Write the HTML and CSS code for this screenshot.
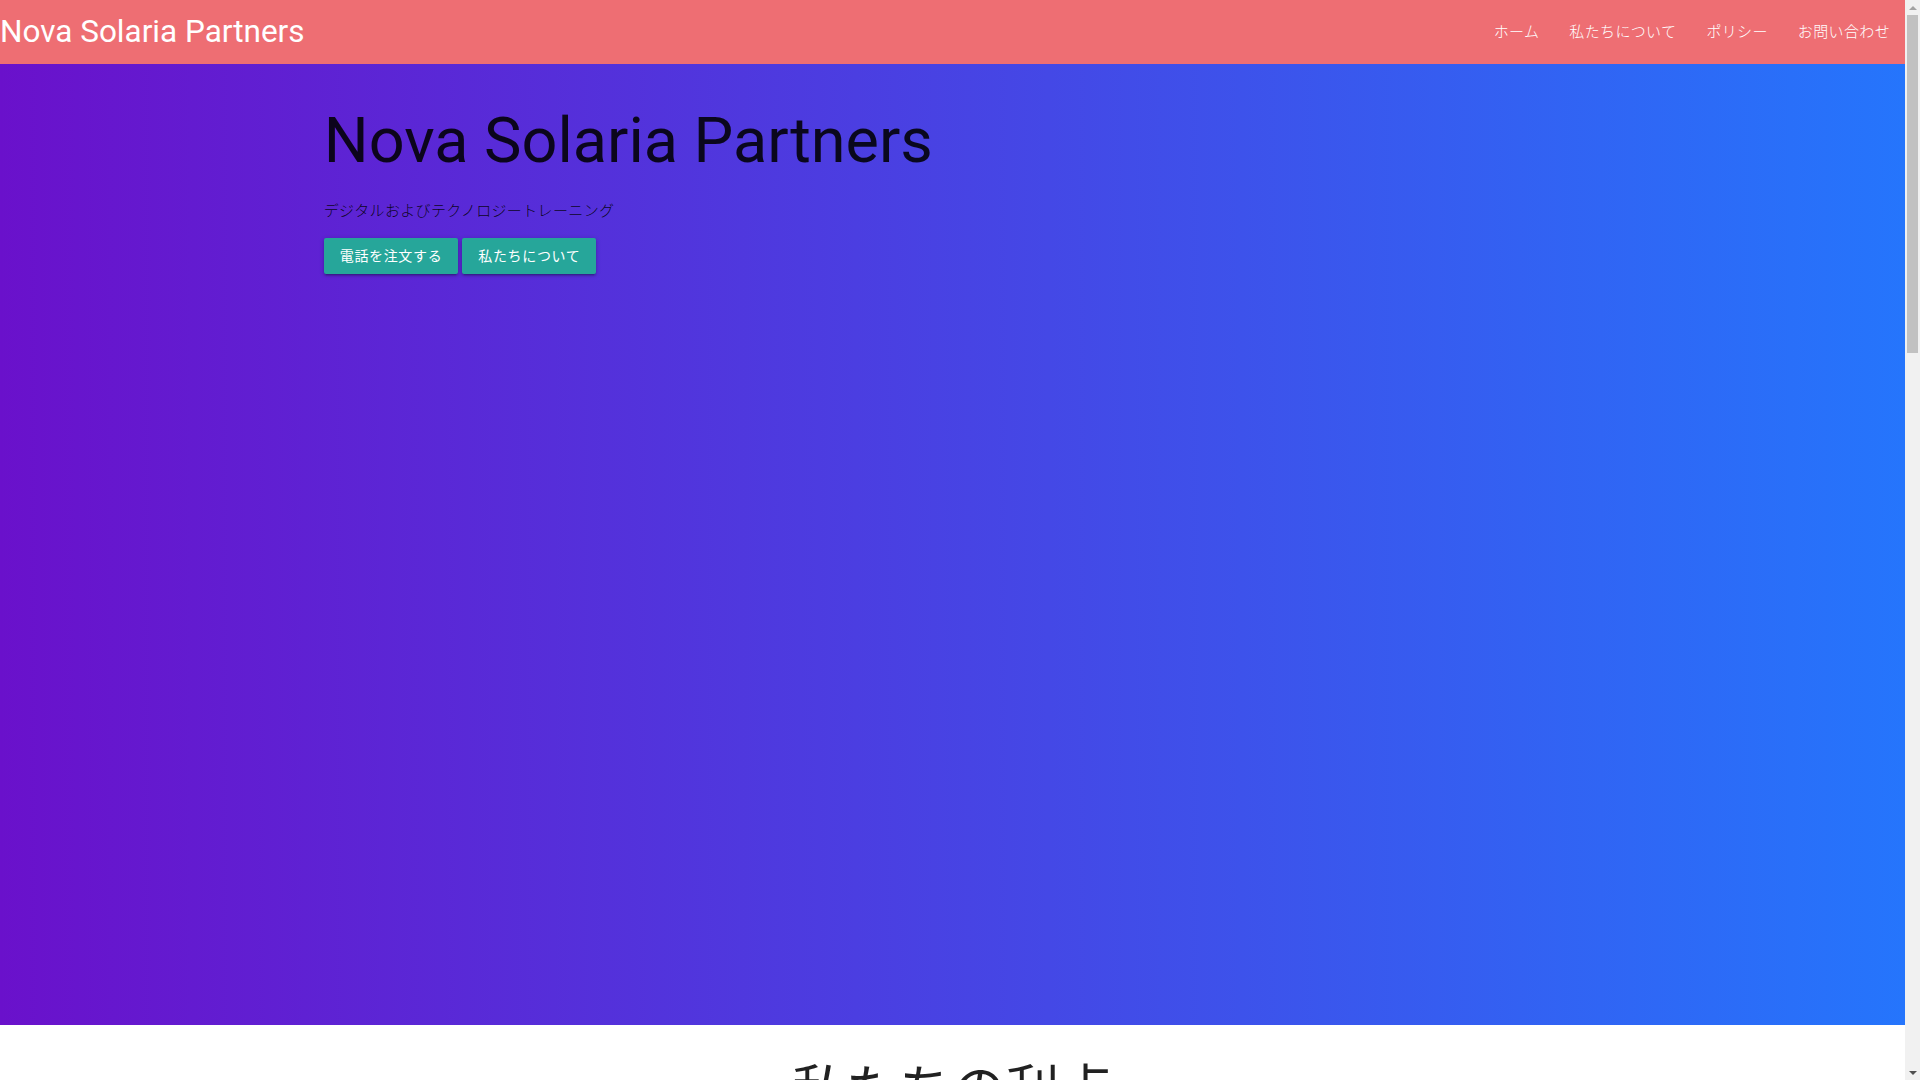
FILE: index.html
```html
<!DOCTYPE html>
<html lang="ja">
<head>
<meta charset="utf-8">
<title>Nova Solaria Partners</title>
<link rel="stylesheet" href="styles.css">
</head>
<body>
<div class="page">
<nav class="navbar">
  <a class="brand" href="#">Nova Solaria Partners</a>
  <ul class="nav-links">
    <li><a href="#">ホーム</a></li>
    <li><a href="#">私たちについて</a></li>
    <li><a href="#">ポリシー</a></li>
    <li><a href="#">お問い合わせ</a></li>
  </ul>
</nav>
<header class="hero">
  <div class="container">
    <div class="col">
      <h1 class="hero-title">Nova Solaria Partners</h1>
      <p class="hero-sub">デジタルおよびテクノロジートレーニング</p>
      <div class="actions">
        <a class="btn" href="#">電話を注文する</a>
        <a class="btn" href="#">私たちについて</a>
      </div>
    </div>
  </div>
</header>
<section class="benefits">
  <div class="container">
    <h2 class="section-title">私たちの利点</h2>
    <div class="features">
      <div class="feature">
        <h3>経験豊富な講師</h3>
        <p>業界で長年の経験を持つ専門家が、実践的な知識をお届けします。</p>
      </div>
      <div class="feature">
        <h3>柔軟なスケジュール</h3>
        <p>オンラインとオフラインのコースで、ご都合に合わせて学べます。</p>
      </div>
      <div class="feature">
        <h3>最新のカリキュラム</h3>
        <p>常に最新のデジタル技術とトレンドに対応した内容です。</p>
      </div>
    </div>
  </div>
</section>
<section class="about">
  <div class="container">
    <h2 class="section-title">私たちについて</h2>
    <p class="about-text">Nova Solaria Partners は、デジタルおよびテクノロジートレーニングを提供する企業です。私たちは個人と企業の成長を支援します。</p>
  </div>
</section>
<footer class="footer">
  <div class="container">
    <p>© Nova Solaria Partners</p>
  </div>
</footer>
</div>
<div class="scrollbar" aria-hidden="true">
  <div class="sb-btn"><span class="tri-up"></span></div>
  <div class="sb-track">
    <div class="sb-thumb"></div>
  </div>
  <div class="sb-btn"><span class="tri-down"></span></div>
</div>
</body>
</html>
```
FILE: styles.css
```css
html {
  font-size: 15px;
  line-height: 1.5;
}
body {
  margin: 0;
  font-family: Roboto, "Noto Sans CJK JP", sans-serif;
  font-weight: 400;
  color: rgba(0, 0, 0, 0.87);
}
.page {
  margin-right: 15px;
}
a {
  text-decoration: none;
}
.navbar {
  display: flex;
  justify-content: space-between;
  align-items: center;
  height: 64px;
  background-color: #ee6e73;
  color: #fff;
}
.brand {
  color: #fff;
  font-size: 31.5px;
  line-height: 64px;
  white-space: nowrap;
}
.nav-links {
  display: flex;
  list-style: none;
  margin: 0;
  padding: 0;
}
.nav-links a {
  display: block;
  padding: 0 15px;
  color: #fff;
  font-size: 15px;
  font-weight: 300;
  letter-spacing: 0.36px;
  line-height: 64px;
}
.hero {
  height: 961px;
  background: linear-gradient(to right, #6a11cb 0%, #2575fc 100%);
}
.container {
  width: 70%;
  max-width: 1280px;
  margin: 0 auto;
}
.col {
  padding: 42px 0.75rem 0;
}
.hero-title {
  margin: 0 0 25.2px;
  font-size: 63px;
  line-height: 110%;
  font-weight: 400;
}
.hero-sub {
  margin: 0 0 15px;
  font-size: 15px;
  font-weight: 300;
  letter-spacing: 0.36px;
  line-height: 22.5px;
}
.actions {
  display: flex;
  gap: 4px;
}
.btn {
  display: inline-block;
  height: 36px;
  line-height: 36px;
  padding: 0 16px;
  font-size: 14px;
  letter-spacing: 0.65px;
  color: #fff;
  background-color: #26a69a;
  border-radius: 2px;
  box-shadow: 0 2px 2px 0 rgba(0, 0, 0, 0.14), 0 3px 1px -2px rgba(0, 0, 0, 0.12), 0 1px 5px 0 rgba(0, 0, 0, 0.2);
}
.benefits {
  padding: 37px 0 200px;
}
.section-title {
  margin: 0 0 21.4px;
  text-align: center;
  font-size: 53.4px;
  line-height: 110%;
  font-weight: 400;
}
.features {
  display: grid;
  grid-template-columns: repeat(3, 1fr);
  gap: 24px;
  padding-top: 60px;
}
.feature {
  padding: 40px 24px;
  min-height: 400px;
  text-align: center;
}
.feature h3 {
  font-size: 24px;
  font-weight: 400;
  margin: 0 0 16px;
}
.feature p {
  margin: 0;
}
.about {
  padding: 120px 0 500px;
  background-color: #f5f5f5;
}
.about-text {
  text-align: center;
  font-size: 18px;
}
.footer {
  padding: 60px 0 400px;
  background-color: #ee6e73;
  color: #fff;
}
.footer p {
  margin: 0;
}
/* emulated classic scrollbar overlaying the right edge */
.scrollbar {
  position: fixed;
  top: 0;
  right: 0;
  width: 15px;
  height: 100vh;
  display: flex;
  flex-direction: column;
  background-color: #f1f1f1;
}
.sb-btn {
  height: 15px;
  display: flex;
  align-items: center;
  justify-content: center;
  flex: none;
}
.tri-up {
  width: 0;
  height: 0;
  border-left: 4px solid transparent;
  border-right: 4px solid transparent;
  border-bottom: 4px solid #a3a3a3;
}
.tri-down {
  width: 0;
  height: 0;
  border-left: 4px solid transparent;
  border-right: 4px solid transparent;
  border-top: 4px solid #505050;
}
.sb-track {
  flex: 1;
  padding: 0 2px;
}
.sb-thumb {
  height: 338px;
  background-color: #c1c1c1;
}
```
